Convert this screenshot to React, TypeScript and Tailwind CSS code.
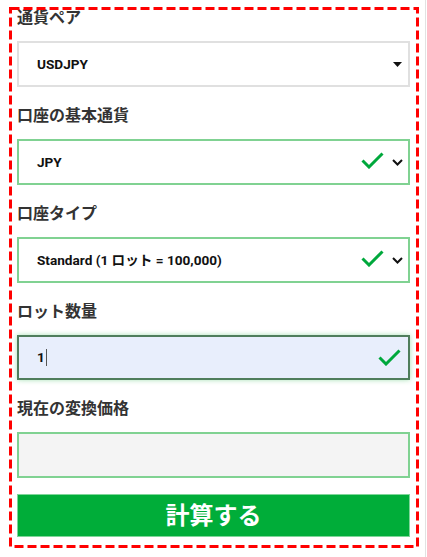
import React from 'react';

const font = { fontFamily: 'Roboto, "Noto Sans CJK JP", sans-serif' };

function Check() {
  return (
    <svg width="23" height="17" viewBox="0 0 23 17" className="shrink-0">
      <path d="M1.5 8.5 L8 15 L21.5 1.5" fill="none" stroke="#00a83c" strokeWidth="3" />
    </svg>
  );
}

function Chevron() {
  return (
    <svg width="11" height="7" viewBox="0 0 11 7" className="shrink-0">
      <path d="M1 1 L5.5 5.5 L10 1" fill="none" stroke="#111" strokeWidth="2" />
    </svg>
  );
}

function Caret() {
  return (
    <svg width="9" height="5" viewBox="0 0 9 5" className="shrink-0">
      <path d="M0 0 H9 L4.5 5 Z" fill="#111" />
    </svg>
  );
}

function Label({ children, first }: { children: React.ReactNode; first?: boolean }) {
  return (
    <div className={`${first ? '' : 'mt-[17px]'} mb-[11px] h-6 text-[16px] leading-6 font-bold text-[#333]`}>
      {children}
    </div>
  );
}

export default function App() {
  return (
    <div className="relative w-[426px] h-[557px] bg-white border-r border-[#e2e2e2] overflow-hidden" style={font}>
      <div className="ml-[17px] w-[393px] pt-[6px] flex flex-col">
        {/* 通貨ペア */}
        <Label first>通貨ペア</Label>
        <div className="h-[46px] flex items-center justify-between border-2 border-[#e0e0e0] bg-white pl-[18px] pr-[6px]">
          <span className="text-[13.6px] font-bold text-[#111]">USDJPY</span>
          <Caret />
        </div>

        {/* 口座の基本通貨 */}
        <Label>口座の基本通貨</Label>
        <div className="h-[46px] flex items-center border-2 border-[#80d292] bg-white pl-[18px] pr-[5px]">
          <span className="flex-1 text-[13.6px] font-bold text-[#111]">JPY</span>
          <div className="-mt-[4px]"><Check /></div>
          <div className="ml-[8px]"><Chevron /></div>
        </div>

        {/* 口座タイプ */}
        <Label>口座タイプ</Label>
        <div className="h-[46px] flex items-center border-2 border-[#80d292] bg-white pl-[18px] pr-[5px]">
          <span className="flex-1 text-[13.6px] font-bold text-[#111]">Standard (1 ロット = 100,000)</span>
          <div className="-mt-[4px]"><Check /></div>
          <div className="ml-[8px]"><Chevron /></div>
        </div>

        {/* ロット数量 */}
        <Label>ロット数量</Label>
        <div className="h-[45px] flex items-center border-2 border-[#4f7d5c] bg-[#e8eefc] pl-[18px] pr-[7px] shadow-[0_0_5px_rgba(60,190,90,0.45)]">
          <span className="flex-1 flex items-center text-[13.6px] font-bold text-[#111]">
            1<span className="ml-[1px] inline-block w-px h-[17px] bg-[#555]" />
          </span>
          <Check />
        </div>

        {/* 現在の変換価格 */}
        <Label>現在の変換価格</Label>
        <div className="h-[46px] border-2 border-[#80d292] bg-[#f4f4f4]" />

        <button className="mt-[16px] h-[43px] w-full bg-[#00ad39] border border-[#7fd69a] text-white text-[24px] font-bold leading-none">
          計算する
        </button>
      </div>

      {/* annotation frame */}
      <svg className="pointer-events-none absolute left-0 top-0" width="427" height="557">
        <rect x="10.5" y="8.5" width="407" height="538" fill="none" stroke="#ff0000" strokeWidth="3" strokeDasharray="9 4" />
      </svg>
    </div>
  );
}
